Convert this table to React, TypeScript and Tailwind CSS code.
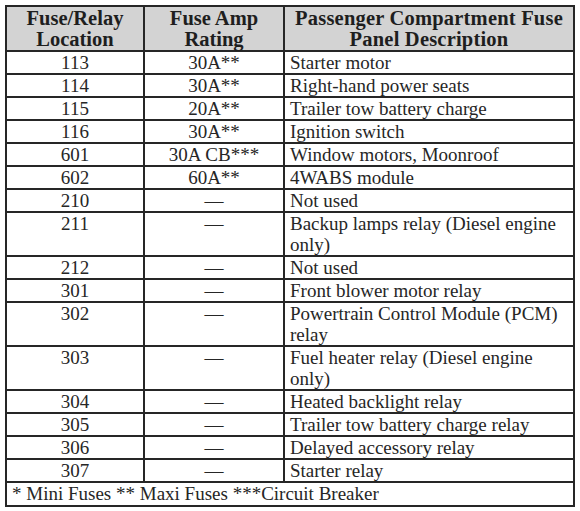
import React from "react";

type Row = { loc: string; amp: string; desc: string };

const rows: Row[] = [
  { loc: "113", amp: "30A**", desc: "Starter motor" },
  { loc: "114", amp: "30A**", desc: "Right-hand power seats" },
  { loc: "115", amp: "20A**", desc: "Trailer tow battery charge" },
  { loc: "116", amp: "30A**", desc: "Ignition switch" },
  { loc: "601", amp: "30A CB***", desc: "Window motors, Moonroof" },
  { loc: "602", amp: "60A**", desc: "4WABS module" },
  { loc: "210", amp: "—", desc: "Not used" },
  { loc: "211", amp: "—", desc: "Backup lamps relay (Diesel engine only)" },
  { loc: "212", amp: "—", desc: "Not used" },
  { loc: "301", amp: "—", desc: "Front blower motor relay" },
  { loc: "302", amp: "—", desc: "Powertrain Control Module (PCM) relay" },
  { loc: "303", amp: "—", desc: "Fuel heater relay (Diesel engine only)" },
  { loc: "304", amp: "—", desc: "Heated backlight relay" },
  { loc: "305", amp: "—", desc: "Trailer tow battery charge relay" },
  { loc: "306", amp: "—", desc: "Delayed accessory relay" },
  { loc: "307", amp: "—", desc: "Starter relay" },
];

export default function App() {
  return (
    <div
      className="bg-white w-[580px] h-[511px] pt-[5px] pl-[5px] text-[#262626]"
      style={{ fontFamily: '"Liberation Serif", "Times New Roman", serif' }}
    >
      <div className="w-[570px] bg-[#262626] p-[2px] grid grid-cols-[136px_138px_288px] gap-[2px]">
        <div className="bg-[#d3d3d3] h-[43px] flex flex-col items-center justify-center text-center font-bold text-[20.5px] leading-[21px] text-[#1e1e1e]">
          <span>Fuse/Relay</span>
          <span>Location</span>
        </div>
        <div className="bg-[#d3d3d3] h-[43px] flex flex-col items-center justify-center text-center font-bold text-[20.5px] leading-[21px] text-[#1e1e1e]">
          <span>Fuse Amp</span>
          <span>Rating</span>
        </div>
        <div className="bg-[#d3d3d3] h-[43px] flex flex-col items-center justify-center text-center font-bold text-[20.5px] leading-[21px] tracking-[0.2px] text-[#1e1e1e]">
          <span>Passenger Compartment Fuse</span>
          <span>Panel Description</span>
        </div>
        {rows.map((r) => (
          <React.Fragment key={r.loc}>
            <div className="bg-white text-center text-[19px] leading-[21px]">{r.loc}</div>
            <div className="bg-white text-center text-[19px] leading-[21px]">{r.amp}</div>
            <div className="bg-white pl-[5px] pr-[2px] text-[19px] leading-[21px]">{r.desc}</div>
          </React.Fragment>
        ))}
        <div className="col-span-3 bg-white h-[22px] pl-[5px] text-[19px] leading-[22px]">
          * Mini Fuses ** Maxi Fuses ***Circuit Breaker
        </div>
      </div>
    </div>
  );
}
